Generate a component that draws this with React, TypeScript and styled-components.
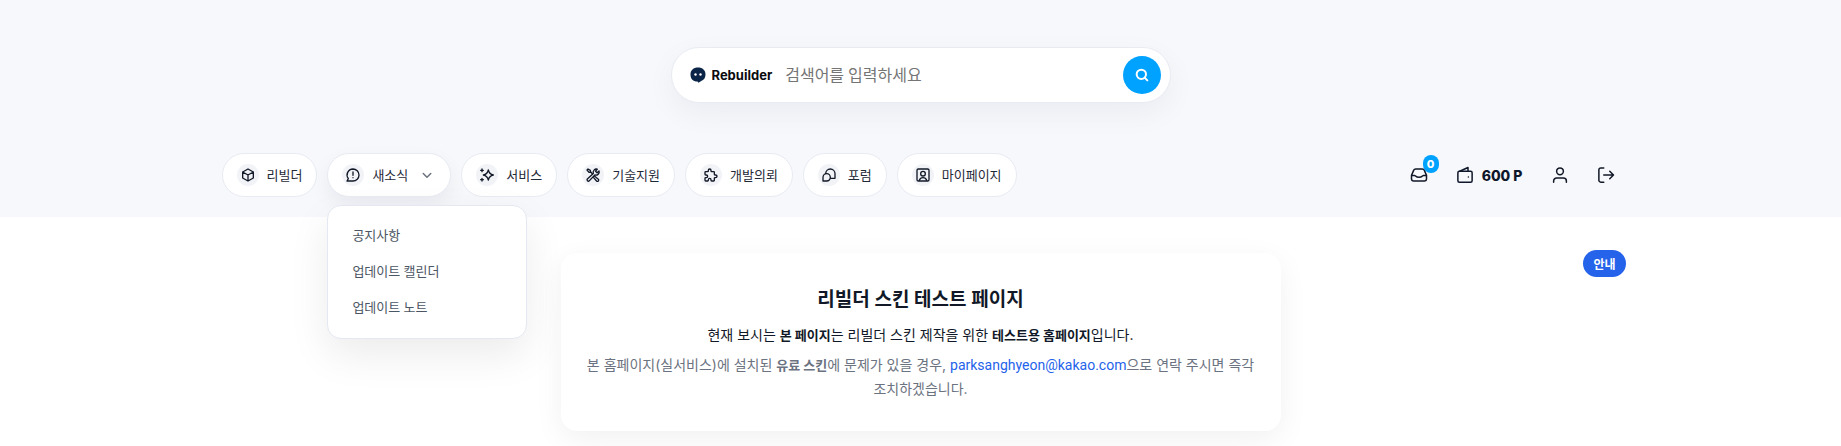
import React from "react";
import styled, { createGlobalStyle } from "styled-components";

const GlobalStyle = createGlobalStyle`
  *, *::before, *::after { box-sizing: border-box; }
  body {
    margin: 0;
    background: #ffffff;
    color: #111827;
    font-family: Roboto, "Noto Sans CJK KR", sans-serif;
    font-size: 14px;
  }
  a { color: inherit; text-decoration: none; }
  button { font: inherit; border: 0; cursor: pointer; }
  h1, p, ul { margin: 0; padding: 0; }
  ul { list-style: none; }
`;

const Header = styled.header`
  display: flex;
  flex-direction: column;
  align-items: center;
  gap: 50px;
  padding: 47px 20px 20px;
  background: #f7f8fc;
`;

const SearchForm = styled.form`
  display: flex;
  align-items: center;
  width: 100%;
  max-width: 500px;
  padding: 8px 9px 8px 18px;
  background: #ffffff;
  border: 1px solid #e8ebf2;
  border-radius: 28px;
  box-shadow: 0 10px 30px rgba(15, 23, 42, 0.05);
`;

const Logo = styled.a`
  display: flex;
  align-items: center;
  gap: 6px;
  color: #0b0b0f;
  font-family: Inter, sans-serif;
  font-size: 13px;
  font-weight: 700;
`;

const SearchInput = styled.input`
  flex: 1;
  min-width: 0;
  height: 38px;
  padding: 0 13px;
  border: 0;
  outline: 0;
  background: transparent;
  color: #111827;
  font: 400 16px Roboto, "Noto Sans CJK KR", sans-serif;
  &::placeholder { color: #757575; opacity: 1; }
`;

const SearchButton = styled.button`
  display: grid;
  place-items: center;
  width: 38px;
  height: 38px;
  padding: 0;
  border-radius: 50%;
  background: #00a2ff;
  color: #ffffff;
`;

const Bar = styled.div`
  display: flex;
  align-items: center;
  justify-content: space-between;
  width: 100%;
  max-width: 1400px;
  padding: 0 1px;
`;

const Menu = styled.ul`
  display: flex;
  gap: 10px;
`;

const MenuItem = styled.li`
  position: relative;
`;

const Pill = styled.a<{ $open?: boolean }>`
  display: flex;
  align-items: center;
  gap: 8px;
  height: 44px;
  padding: 0 14px;
  background: #ffffff;
  border: 1px solid #e8ebf2;
  border-radius: 22px;
  box-shadow: ${(p) => (p.$open ? "0 8px 20px rgba(15, 23, 42, 0.06)" : "none")};
  color: #1f2937;
  font-size: 13px;
  white-space: nowrap;
`;

const PillLabel = styled.span`
  padding-bottom: 2px;
`;

const PillIcon = styled.span`
  display: grid;
  place-items: center;
  width: 22px;
  height: 22px;
  border-radius: 50%;
  background: #f1f3f7;
  color: #111827;
`;

const Chevron = styled.span`
  display: flex;
  padding-left: 2px;
  color: #6b7280;
`;

const Dropdown = styled.ul`
  position: absolute;
  top: 52px;
  left: 0;
  z-index: 2;
  width: 200px;
  padding: 12px 0;
  background: #ffffff;
  border: 1px solid #e5e8f2;
  border-radius: 14px;
  box-shadow: 0 16px 40px rgba(0, 0, 0, 0.08);
`;

const DropdownLink = styled.a`
  display: block;
  padding: 0 24px;
  color: #4b5563;
  font-size: 13px;
  line-height: 36px;
`;

const Tools = styled.div`
  display: flex;
  align-items: center;
  gap: 18px;
`;

const ToolLink = styled.a`
  position: relative;
  display: grid;
  place-items: center;
  width: 28px;
  height: 28px;
`;

const CountBadge = styled.span`
  position: absolute;
  top: -6px;
  right: -6px;
  min-width: 16px;
  padding: 0 4px;
  border-radius: 9px;
  background: #00a2ff;
  color: #ffffff;
  font-family: Inter, sans-serif;
  font-size: 11px;
  font-weight: 800;
  line-height: 18px;
  text-align: center;
`;

const Points = styled.a`
  display: flex;
  align-items: center;
  gap: 8px;
  padding: 0 5px;
  color: #0f172a;
  font-family: Inter, sans-serif;
  font-weight: 800;
`;

const Main = styled.main`
  display: grid;
  grid-template-columns: 1fr minmax(0, 720px) 1fr;
  align-items: start;
  max-width: 1410px;
  margin: 0 auto;
  padding: 33px 0 15px;
`;

const Notice = styled.section`
  grid-column: 2;
  margin-top: 3px;
  padding: 30px 24px;
  background: #ffffff;
  border-radius: 16px;
  box-shadow: 0 8px 30px rgba(0, 0, 0, 0.06);
  text-align: center;
`;

const Title = styled.h1`
  margin-bottom: 7px;
  color: #111827;
  font-size: 19px;
  font-weight: 700;
  line-height: 33px;
`;

const Text = styled.p<{ $muted?: boolean }>`
  color: ${(p) => (p.$muted ? "#6b7280" : "#111827")};
  font-family: Inter, "Noto Sans CJK KR", sans-serif;
  line-height: 24px;
  word-break: keep-all;
  & + & { margin-top: 6px; }
  b { font-size: 13px; }
`;

const Mail = styled.a`
  && { color: #2563eb; }
  font-family: Roboto, sans-serif;
`;

const GuideButton = styled.button`
  justify-self: end;
  height: 27px;
  padding: 0 10px;
  border-radius: 14px;
  background: #2563eb;
  color: #ffffff;
  && { font-size: 12px; font-weight: 600; }
`;

type IconProps = { size?: number; stroke?: number; children: React.ReactNode };
const Icon = ({ size = 16, stroke = 2, children }: IconProps) => (
  <svg width={size} height={size} viewBox="0 0 24 24" fill="none" stroke="currentColor"
    strokeWidth={stroke} strokeLinecap="round" strokeLinejoin="round" aria-hidden="true">
    {children}
  </svg>
);

const menu: { label: string; icon: React.ReactNode; children?: string[] }[] = [
  {
    label: "리빌더",
    icon: <Icon><path d="M12 3l8 4.500v9L12 21l-8-4.500v-9zM4 7.500l8 4.500 8-4.500M12 12v9" /></Icon>,
  },
  {
    label: "새소식",
    icon: <Icon><path d="M12 3a9 9 0 1 1 0 18H3l2-3.500A9 9 0 0 1 12 3zM12 7.500v5M12 16v.01" /></Icon>,
    children: ["공지사항", "업데이트 캘린더", "업데이트 노트"],
  },
  {
    label: "서비스",
    icon: (
      <Icon>
        <path d="M14 4.500c1 4.500 3 6.500 7.500 7.500-4.500 1-6.500 3-7.500 7.500-1-4.500-3-6.500-7.500-7.500 4.500-1 6.500-3 7.500-7.500z" />
        <path d="M4.500 3v4M2.500 5h4M4.500 17v4M2.500 19h4" />
      </Icon>
    ),
  },
  {
    label: "기술지원",
    icon: (
      <Icon>
        <path d="M18.500 3.200a5 5 0 0 0-6 6.500L3.500 18a2 2 0 0 0 2.800 2.800l8.500-8.800a5 5 0 0 0 6.300-6.200l-3 2.800-2.300-2.300z" />
        <path d="M3 4.500L4.500 3l3.500 2 .5 2.500L11 10M8.500 7.500L6 8 3 4.500M14.500 14l5.500 4.300a1.900 1.900 0 0 1-2.700 2.700L13 16" />
      </Icon>
    ),
  },
  {
    label: "개발의뢰",
    icon: (
      <Icon>
        <path d="M4 7h3a1 1 0 0 0 1-1V5a2 2 0 0 1 4 0v1a1 1 0 0 0 1 1h3a1 1 0 0 1 1 1v3a1 1 0 0 0 1 1h1a2 2 0 0 1 0 4h-1a1 1 0 0 0-1 1v3a1 1 0 0 1-1 1h-3a1 1 0 0 1-1-1v-1a2 2 0 0 0-4 0v1a1 1 0 0 1-1 1H4a1 1 0 0 1-1-1v-3a1 1 0 0 1 1-1h1a2 2 0 0 0 0-4H4a1 1 0 0 1-1-1V8a1 1 0 0 1 1-1" />
      </Icon>
    ),
  },
  {
    label: "포럼",
    icon: <Icon><path d="M7 10a7 7 0 1 1 14 0v7h-7M8.500 10a5.500 5.500 0 1 1 0 11H3v-5.500A5.500 5.500 0 0 1 8.500 10z" /></Icon>,
  },
  {
    label: "마이페이지",
    icon: (
      <Icon>
        <rect x="3" y="3" width="18" height="18" rx="2" />
        <circle cx="12" cy="10" r="3.500" />
        <path d="M6.500 20c1-3 3-4 5.500-4s4.500 1 5.500 4" />
      </Icon>
    ),
  },
];

export default function App() {
  return (
    <>
      <GlobalStyle />
      <Header>
        <SearchForm role="search" onSubmit={(e) => e.preventDefault()}>
          <Logo href="#">
            <svg width="16" height="16" viewBox="0 0 16 16" aria-hidden="true">
              <path d="M8 0.500c4.600 0 7.500 2.700 7.500 7 0 3.300-1.700 5.600-4.300 6.500L8.500 15.800 7.500 14.600C3 14.600.5 11.800.5 7.500.5 3.200 3.400.5 8 .5z" fill="#0b2548" />
              <circle cx="5.500" cy="7.500" r="1.200" fill="#fff" />
              <circle cx="10.500" cy="7.500" r="1.200" fill="#fff" />
            </svg>
            Rebuilder
          </Logo>
          <SearchInput type="text" placeholder="검색어를 입력하세요" aria-label="검색어" />
          <SearchButton type="submit" aria-label="검색">
            <Icon stroke={3}><circle cx="11" cy="11" r="7" /><path d="M16 16l4 4" /></Icon>
          </SearchButton>
        </SearchForm>
        <Bar>
          <nav>
            <Menu>
              {menu.map((item) => (
                <MenuItem key={item.label}>
                  <Pill href="#" $open={!!item.children}>
                    <PillIcon>{item.icon}</PillIcon>
                    <PillLabel>{item.label}</PillLabel>
                    {item.children && (
                      <Chevron><Icon size={18}><path d="M7 10l5 5 5-5" /></Icon></Chevron>
                    )}
                  </Pill>
                  {item.children && (
                    <Dropdown>
                      {item.children.map((c) => (
                        <li key={c}><DropdownLink href="#">{c}</DropdownLink></li>
                      ))}
                    </Dropdown>
                  )}
                </MenuItem>
              ))}
            </Menu>
          </nav>
          <Tools>
            <ToolLink href="#" aria-label="알림">
              <Icon size={18}>
                <path d="M2 12.500L5 5.500Q5.700 4 7.500 4h9q1.800 0 2.500 1.500l3 7V17a3 3 0 0 1-3 3H5a3 3 0 0 1-3-3zM2 12.500h4c1.500 0 1.500 2.500 6 2.500s4.500-2.500 6-2.500h4" />
              </Icon>
              <CountBadge>0</CountBadge>
            </ToolLink>
            <Points href="#">
              <Icon size={18}>
                <rect x="2.500" y="7" width="19" height="14.500" rx="2" />
                <path d="M5 7l11-5V7M16.500 14.500v.01" />
              </Icon>
              600 P
            </Points>
            <ToolLink href="#" aria-label="내 정보">
              <Icon size={18}>
                <circle cx="12" cy="7" r="4.500" />
                <path d="M3.500 21.500v-1.500a4 4 0 0 1 4-4h9a4 4 0 0 1 4 4v1.500" />
              </Icon>
            </ToolLink>
            <ToolLink href="#" aria-label="로그아웃">
              <Icon size={18}>
                <path d="M9 2.500H5a2.500 2.500 0 0 0-2.500 2.500v14A2.500 2.500 0 0 0 5 21.500h4M9 12h13M17 7l5 5-5 5" />
              </Icon>
            </ToolLink>
          </Tools>
        </Bar>
      </Header>
      <Main>
        <Notice>
          <Title>리빌더 스킨 테스트 페이지</Title>
          <Text>
            현재 보시는 <b>본 페이지</b>는 리빌더 스킨 제작을 위한 <b>테스트용 홈페이지</b>입니다.
          </Text>
          <Text $muted>
            본 홈페이지(실서비스)에 설치된 <b>유료 스킨</b>에 문제가 있을 경우,{" "}
            <Mail href="mailto:parksanghyeon@kakao.com">parksanghyeon@kakao.com</Mail>으로 연락 주시면 즉각
            조치하겠습니다.
          </Text>
        </Notice>
        <GuideButton type="button">안내</GuideButton>
      </Main>
    </>
  );
}
